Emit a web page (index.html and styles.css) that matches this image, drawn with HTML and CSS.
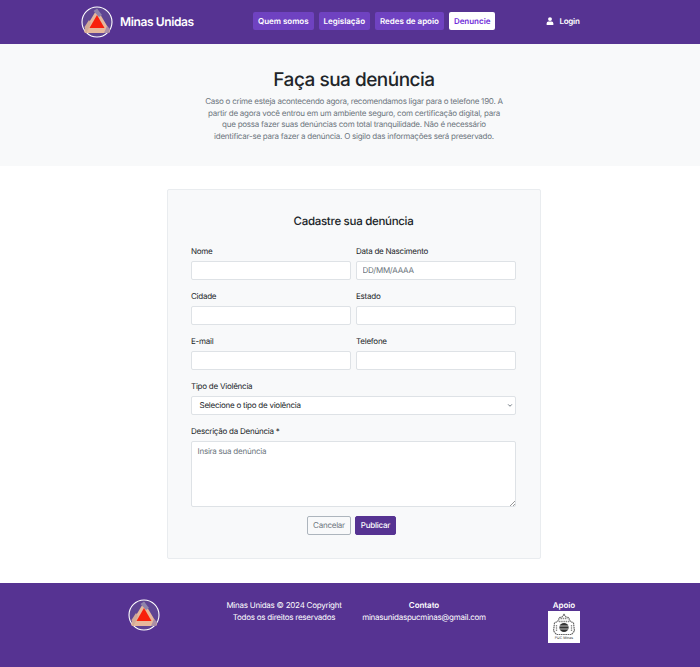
FILE: index.html
```html
<!DOCTYPE html>
<html lang="pt-BR">
<head>
<meta charset="utf-8">
<title>Minas Unidas</title>
<link rel="stylesheet" href="styles.css">
</head>
<body>
<svg class="defs" width="0" height="0" aria-hidden="true">
  <symbol id="logo" viewBox="0 0 32 32">
    <circle cx="16" cy="16" r="15" fill="#5f4593" stroke="#fff" stroke-width="1.1"/>
    <path d="M16 3 L28.5 24 Q29.5 27 27 27 L5 27 Q2.5 27 3.5 24 Z" fill="#e6b89c"/>
    <path d="M12.5 5 L16 2.5 L21 9 L18 11 Z" fill="#8f84ab"/>
    <path d="M23 27 L28 27 L29 23 L26 20 Z" fill="#ab8fa6"/>
    <path d="M3.5 21 L8 14 L10 17 L7 24 L5 27 Z" fill="#d2aa98"/>
    <path d="M16 9 L23.5 22 L8.5 22 Z" fill="#f8200c"/>
  </symbol>
</svg>

<header class="topbar">
  <a class="brand" href="#">
    <svg class="logo"><use href="#logo"/></svg>
    <span class="brand-name">Minas Unidas</span>
  </a>
  <nav class="menu">
    <a class="menu-link" href="#">Quem somos</a>
    <a class="menu-link" href="#">Legislação</a>
    <a class="menu-link" href="#">Redes de apoio</a>
    <a class="menu-link menu-link-active" href="#">Denuncie</a>
  </nav>
  <a class="login" href="#">
    <svg class="login-icon" viewBox="0 0 10 10"><circle cx="5" cy="2.6" r="2.4" fill="#fff"/><path d="M0.8 10 V8 Q0.8 5.6 3 5.6 H7 Q9.2 5.6 9.2 8 V10 Z" fill="#fff"/></svg>
    Login
  </a>
</header>

<section class="hero">
  <h1 class="hero-title">Faça sua denúncia</h1>
  <p class="hero-text">Caso o crime esteja acontecendo agora, recomendamos ligar para o telefone 190. A partir de agora você entrou em um ambiente seguro, com certificação digital, para que possa fazer suas denúncias com total tranquilidade. Não é necessário identificar-se para fazer a denúncia. O sigilo das informações será preservado.</p>
</section>

<main class="content">
  <form class="card">
    <h2 class="card-title">Cadastre sua denúncia</h2>
    <div class="form-grid">
      <div class="field"><label class="label">Nome</label><input class="control" type="text"></div>
      <div class="field"><label class="label">Data de Nascimento</label><input class="control" type="text" placeholder="DD/MM/AAAA"></div>
      <div class="field"><label class="label">Cidade</label><input class="control" type="text"></div>
      <div class="field"><label class="label">Estado</label><input class="control" type="text"></div>
      <div class="field"><label class="label">E-mail</label><input class="control" type="text"></div>
      <div class="field"><label class="label">Telefone</label><input class="control" type="text"></div>
      <div class="field field-wide">
        <label class="label">Tipo de Violência</label>
        <div class="select">
          <span>Selecione o tipo de violência</span>
          <svg class="chevron" viewBox="0 0 8 6"><path d="M1.5 1.5 L4 4 L6.5 1.5" fill="none" stroke="#6c757d" stroke-width="1.3"/></svg>
        </div>
      </div>
      <div class="field field-wide">
        <label class="label">Descrição da Denúncia *</label>
        <textarea class="control control-area" placeholder="Insira sua denúncia"></textarea>
      </div>
    </div>
    <div class="actions">
      <button class="btn btn-outline" type="button">Cancelar</button>
      <button class="btn btn-primary" type="button">Publicar</button>
    </div>
  </form>
</main>

<footer class="footer">
  <div class="footer-col footer-col-logo"><svg class="logo"><use href="#logo"/></svg></div>
  <div class="footer-col">
    <p class="footer-line">Minas Unidas © 2024 Copyright</p>
    <p class="footer-line">Todos os direitos reservados</p>
  </div>
  <div class="footer-col">
    <p class="footer-line footer-head">Contato</p>
    <p class="footer-line">minasunidaspucminas@gmail.com</p>
  </div>
  <div class="footer-col">
    <p class="footer-line footer-head">Apoio</p>
    <div class="seal">
      <svg class="seal-art" viewBox="0 0 32 32">
        <path d="M16 3.5 L18 6 L20.5 6.5 L22 10 L25.5 12 L26.5 20 L23.5 23.5 H8.5 L5.5 20 L6.5 12 L10 10 L11.5 6.5 L14 6 Z" fill="#fff" stroke="#666" stroke-width="1.2" stroke-dasharray="1.6 .6"/>
        <path d="M12.5 7.5 H19.5 M11 10.5 H21 M8.5 14 V20 M23.5 14 V20" stroke="#888" stroke-width="1.3" stroke-dasharray="1.5 .7"/>
        <circle cx="16" cy="16.5" r="4.6" fill="#333"/>
        <path d="M12 15 H20 M12 18 H20" stroke="#ddd" stroke-width=".8"/>
        <text class="seal-text" x="16" y="28" text-anchor="middle">PUC Minas</text>
      </svg>
    </div>
  </div>
</footer>
</body>
</html>
```
FILE: styles.css
```css
* { box-sizing: border-box; }
html, body { margin: 0; padding: 0; }
body { font-family: Inter, "Liberation Sans", sans-serif; color: #212529; background: #fff; width: 700px; height: 667px; overflow: hidden; text-rendering: geometricPrecision; letter-spacing: -0.24px; }
a { text-decoration: none; color: inherit; }
p, h1, h2 { margin: 0; }
.defs { position: absolute; }

.topbar { height: 44px; background: #563392; display: flex; align-items: center; padding-left: 81px; color: #fff; }
.brand { display: flex; align-items: center; gap: 7px; width: 172px; }
.logo { width: 32px; height: 32px; display: block; }
.brand-name { font-size: 12px; font-weight: 600; letter-spacing: -0.38px; margin-bottom: 2px; }
.menu { display: flex; gap: 5px; margin-bottom: 2px; }
.menu-link { height: 18px; padding: 0 5px; display: flex; align-items: center; background: #6f42c1; color: #fff; font-size: 8px; font-weight: 600; border-radius: 2px; white-space: nowrap; letter-spacing: -0.02px; }
.menu-link-active { background: #fff; color: #6f2bd9; }
.login { margin-left: 51px; display: flex; align-items: center; gap: 5px; font-size: 8px; font-weight: 600; color: #fff; margin-bottom: 2px; }
.login-icon { width: 8px; height: 8px; }

.hero { height: 122px; background: #f8f9fa; padding: 24px 0 0 8px; text-align: center; }
.hero-title { font-size: 19px; line-height: 24px; font-weight: 500; color: #212529; letter-spacing: -0.5px; }
.hero-text { width: 302px; margin: 4px auto 0; font-size: 8px; line-height: 11.6px; color: #6c757d; }

.content { padding: 23px 0 24px 8px; display: flex; justify-content: center; }
.card { width: 374px; height: 370px; background: #f8f9fa; border: 1px solid #e9ecef; border-radius: 2px; padding: 24px 24px 0 23px; }
.card-title { font-size: 11.5px; line-height: 15px; font-weight: 500; text-align: center; color: #212529; margin-bottom: 17px; letter-spacing: -0.3px; }
.form-grid { display: grid; grid-template-columns: 160px 160px; column-gap: 5px; row-gap: 11px; }
.field { display: flex; flex-direction: column; min-width: 0; }
.field-wide { grid-column: 1 / -1; }
.label { font-size: 8px; line-height: 10px; height: 14.5px; color: #212529; }
.control { display: block; width: 100%; height: 19.5px; border: 1px solid #dee2e6; border-radius: 2px; background: #fff; padding: 0 5.5px; font-family: inherit; font-size: 8px; color: #212529; outline: none; text-rendering: geometricPrecision; letter-spacing: inherit; }
.control::placeholder { color: #6c757d; opacity: 1; }
.control-area { height: 66px; padding-top: 3px; line-height: 12px; resize: vertical; }
.control-area::-webkit-resizer { background: linear-gradient(135deg, transparent 50%, #999 50%, #999 60%, transparent 60%, transparent 75%, #999 75%, #999 85%, transparent 85%) no-repeat right bottom / 5px 5px; }
.select { height: 19.5px; border: 1px solid #dee2e6; border-radius: 2px; background: #fff; padding: 0 2px 0 7.5px; font-size: 8px; color: #212529; display: flex; align-items: center; justify-content: space-between; }
.chevron { width: 6px; height: 5px; }

.actions { display: flex; justify-content: center; gap: 4px; margin-top: 9px; padding-right: 4px; }
.btn { height: 19px; border-radius: 2px; font-family: inherit; font-size: 8px; padding: 0; text-rendering: geometricPrecision; letter-spacing: inherit; }
.btn-outline { width: 44px; background: transparent; border: 1px solid #adb5bd; color: #6c757d; }
.btn-primary { width: 41px; background: #563392; border: 1px solid #563392; color: #fff; font-weight: 500; }

.footer { height: 84px; background: #563392; color: #fff; display: grid; grid-template-columns: repeat(4, 140px); padding: 16px 0 0 74px; }
.footer-col { text-align: center; }
.footer-col-logo { display: flex; justify-content: center; align-items: flex-start; }
.footer-line { font-size: 8px; line-height: 12px; }
.footer-head { font-weight: 600; letter-spacing: -0.05px; }
.seal { width: 32px; height: 32px; background: #fff; margin: 0 auto; }
.seal-art { display: block; width: 32px; height: 32px; }
.seal-text { font-size: 3.5px; fill: #333; letter-spacing: 0; }
```
